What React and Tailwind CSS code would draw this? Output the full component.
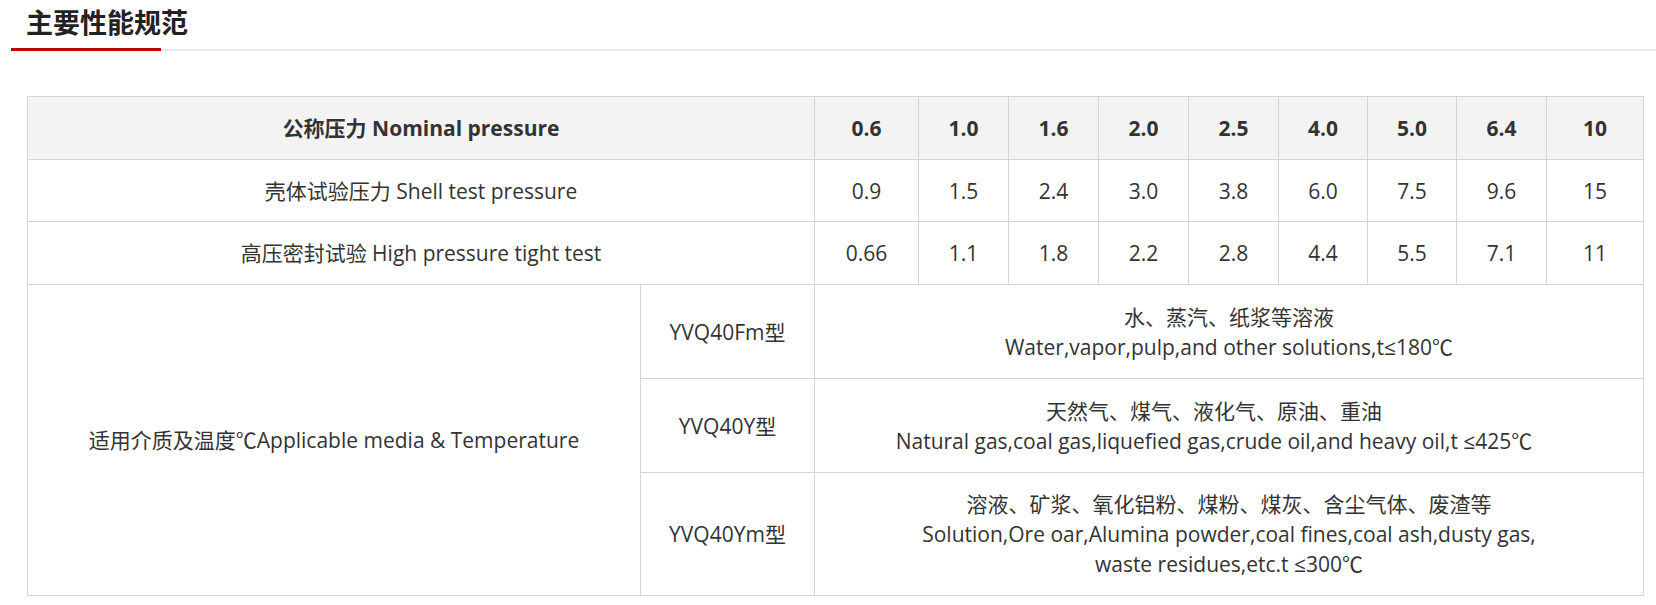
export default function App() {
  const head = ["0.6", "1.0", "1.6", "2.0", "2.5", "4.0", "5.0", "6.4", "10"];
  const shell = ["0.9", "1.5", "2.4", "3.0", "3.8", "6.0", "7.5", "9.6", "15"];
  const tight = ["0.66", "1.1", "1.8", "2.2", "2.8", "4.4", "5.5", "7.1", "11"];
  const widths = [613, 174, 104, 90, 90, 90, 90, 89, 89, 90, 97];
  const td = "border border-[#d4d4d4] text-center align-middle p-0";
  return (
    <div
      className="w-[1656px] h-[605px] bg-white text-[#333]"
      style={{ fontFamily: '"Open Sans", "Noto Sans CJK SC", sans-serif' }}
    >
      <div className="pt-[4px] pl-[11px]">
        <div className="pl-[15px] h-[44px] text-[27px] leading-[38px] font-bold text-[#222]">
          主要性能规范
        </div>
        <div className="flex items-end">
          <div className="w-[150px] h-[3px] bg-[#c00000]" />
          <div className="flex-1 h-[2px] bg-[#e6e6e6]" />
        </div>
      </div>
      <div className="pl-[27px] pt-[45px]">
        <table className="table-fixed border-collapse w-[1616px] text-[21px] leading-[30px]">
          <colgroup>
            {widths.map((w, i) => (
              <col key={i} style={{ width: w }} />
            ))}
          </colgroup>
          <tbody>
            <tr className="h-[63px] bg-[#f3f3f3] font-bold">
              <td colSpan={2} className={td}>公称压力 Nominal pressure</td>
              {head.map((v) => (
                <td key={v} className={td}>{v}</td>
              ))}
            </tr>
            <tr className="h-[62px]">
              <td colSpan={2} className={td}>壳体试验压力 Shell test pressure</td>
              {shell.map((v, i) => (
                <td key={i} className={td}>{v}</td>
              ))}
            </tr>
            <tr className="h-[63px]">
              <td colSpan={2} className={td}>高压密封试验 High pressure tight test</td>
              {tight.map((v, i) => (
                <td key={i} className={td}>{v}</td>
              ))}
            </tr>
            <tr className="h-[94px]">
              <td rowSpan={3} className={td}>适用介质及温度℃Applicable media &amp; Temperature</td>
              <td className={td}>YVQ40Fm型</td>
              <td colSpan={9} className={td}>
                水、蒸汽、纸浆等溶液
                <br />
                Water,vapor,pulp,and other solutions,t≤180℃
              </td>
            </tr>
            <tr className="h-[94px]">
              <td className={td}>YVQ40Y型</td>
              <td colSpan={9} className={`${td} pr-[30px]`}>
                天然气、煤气、液化气、原油、重油
                <br />
                Natural gas,coal gas,liquefied gas,crude oil,and heavy oil,t ≤425℃
              </td>
            </tr>
            <tr className="h-[123px]">
              <td className={td}>YVQ40Ym型</td>
              <td colSpan={9} className={td}>
                溶液、矿浆、氧化铝粉、煤粉、煤灰、含尘气体、废渣等
                <br />
                Solution,Ore oar,Alumina powder,coal fines,coal ash,dusty gas,
                <br />
                waste residues,etc.t ≤300℃
              </td>
            </tr>
          </tbody>
        </table>
      </div>
    </div>
  );
}
